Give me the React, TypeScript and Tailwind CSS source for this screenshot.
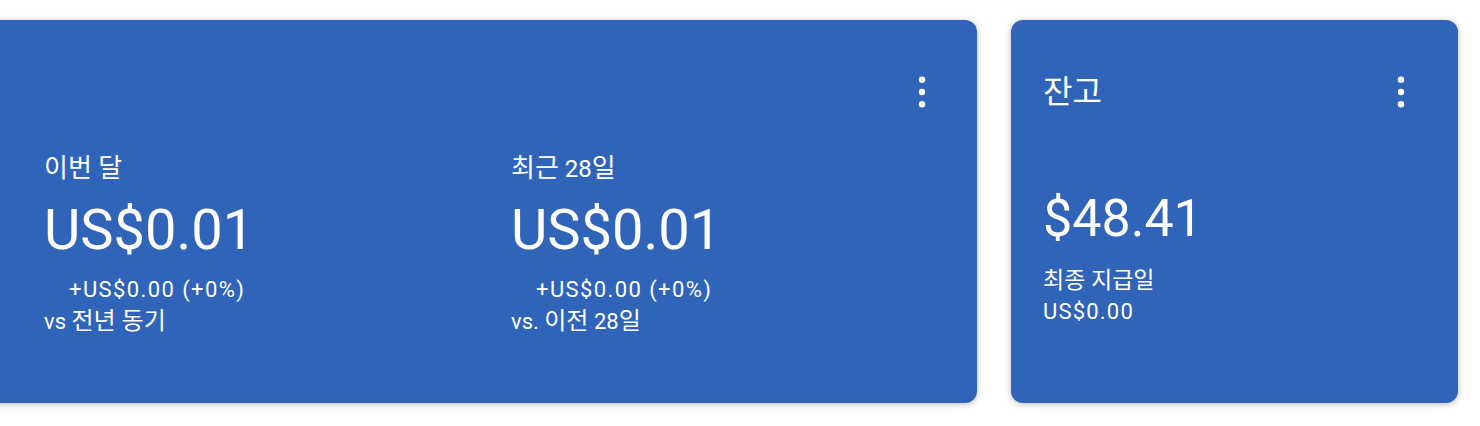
import React from "react";

const FONT = { fontFamily: "Roboto, 'Noto Sans CJK KR', sans-serif" } as const;

function Kebab() {
  return (
    <button className="flex h-12 w-6 items-center justify-center" aria-label="more">
      <svg width="8" height="32" viewBox="0 0 8 32" fill="white">
        <circle cx="4" cy="3.7" r="3.2" />
        <circle cx="4" cy="16" r="3.2" />
        <circle cx="4" cy="28.3" r="3.2" />
      </svg>
    </button>
  );
}

function Metric({
  label,
  value,
  delta,
  compare,
  className,
}: {
  label: React.ReactNode;
  value: string;
  delta: string;
  compare: React.ReactNode;
  className: string;
}) {
  return (
    <div className={`flex flex-col text-white ${className}`}>
      <div className="mt-[36px] text-[24px] leading-[32px]">{label}</div>
      <div className="mt-[13px] text-[56px] leading-[64px]">{value}</div>
      <div className="ml-[25px] mt-[14px] text-[22px] leading-[28px] tracking-[1.4px]">{delta}</div>
      <div className="mt-[3px] text-[22px] leading-[28px]">{compare}</div>
    </div>
  );
}

export default function App() {
  return (
    <div className="h-[426px] w-[1480px] overflow-hidden bg-white" style={FONT}>
      <div className="flex items-start pt-[20px]">
        <div className="-ml-[20px] flex h-[383px] w-[997px] shrink-0 flex-col rounded-[12px] bg-[#3064b9] pl-[64px] pr-[43px] pt-[48px] shadow-[0_1px_6px_rgba(0,0,0,0.28)]">
          <div className="flex h-12 items-center justify-end">
            <Kebab />
          </div>
          <div className="flex">
            <Metric
              className="w-[467px] shrink-0"
              label={<span className="text-[26px]">이번 달</span>}
              value="US$0.01"
              delta="+US$0.00 (+0%)"
              compare={
                <>
                  vs <span className="text-[24px]">전년 동기</span>
                </>
              }
            />
            <Metric
              className="flex-1"
              label={
                <>
                  <span className="text-[26px]">최근</span> 28<span className="text-[26px]">일</span>
                </>
              }
              value="US$0.01"
              delta="+US$0.00 (+0%)"
              compare={
                <>
                  vs. <span className="text-[24px]">이전</span> 28<span className="text-[24px]">일</span>
                </>
              }
            />
          </div>
        </div>
        <div className="ml-[34px] flex h-[383px] w-[447px] shrink-0 flex-col rounded-[12px] bg-[#3064b9] pl-[32px] pr-[45px] pt-[48px] text-white shadow-[0_1px_6px_rgba(0,0,0,0.28)]">
          <div className="flex h-12 items-center justify-between">
            <div className="text-[32px] leading-[48px]">잔고</div>
            <Kebab />
          </div>
          <div className="mt-[73px] text-[52px] leading-[60px]">$48.41</div>
          <div className="mt-[18px] text-[23px] leading-[28px]">최종 지급일</div>
          <div className="mt-[3px] text-[22px] leading-[28px] tracking-[1.2px]">US$0.00</div>
        </div>
      </div>
    </div>
  );
}
